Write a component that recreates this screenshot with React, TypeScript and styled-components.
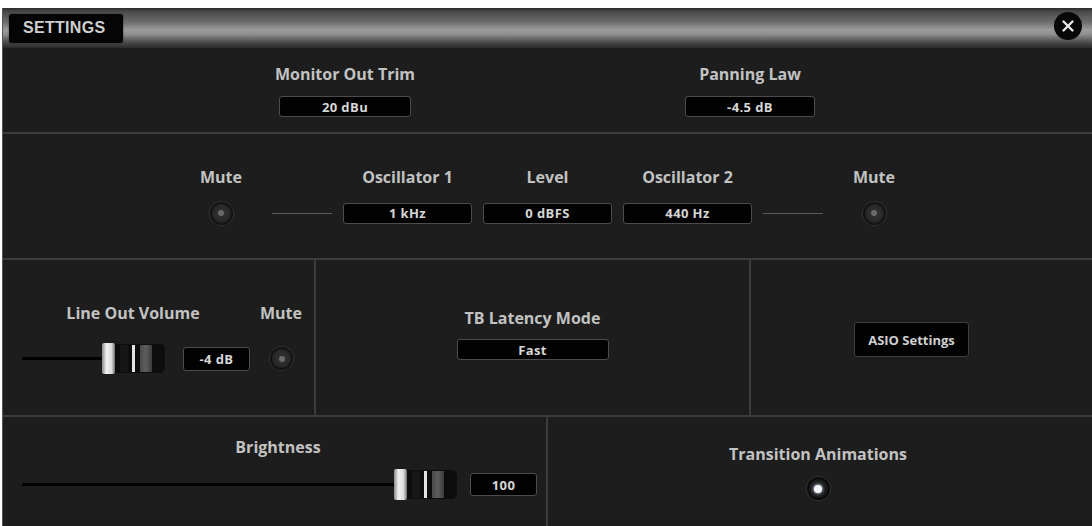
import React from "react";
import styled, { createGlobalStyle } from "styled-components";

const GlobalStyle = createGlobalStyle`
  html, body {
    margin: 0;
    padding: 0;
    background: #ffffff;
  }
  * {
    box-sizing: border-box;
  }
`;

const Page = styled.div`
  width: 1092px;
  height: 526px;
  padding: 8px 0 0 2px;
  background: #ffffff;
  overflow: hidden;
`;

const Panel = styled.div`
  width: 1090px;
  height: 518px;
  display: flex;
  flex-direction: column;
  background: #1d1d1d;
  font-family: "Open Sans", "Liberation Sans", sans-serif;
  color: #c6c6c6;
  border-left: 1px solid #555;
`;

const TitleBar = styled.div`
  height: 40px;
  flex: none;
  display: flex;
  align-items: center;
  justify-content: space-between;
  padding: 0 10px 0 6px;
  background: linear-gradient(
    to bottom,
    #2c2c2c 0%,
    #4c4c4c 10%,
    #6c6c6c 35%,
    #9c9c9c 55%,
    #8e8e8e 66%,
    #4a4a4a 86%,
    #2a2a2a 100%
  );
`;

const TitleTab = styled.div`
  height: 29px;
  width: 114px;
  display: flex;
  align-items: center;
  padding-left: 14px;
  background: #050505;
  border-radius: 3px;
  box-shadow: 0 0 2px rgba(0, 0, 0, 0.6);
  font-family: "Liberation Sans", Arial, sans-serif;
  font-weight: 700;
  font-size: 16px;
  letter-spacing: 0.3px;
  color: #cfcfcf;
`;

const CloseButton = styled.div`
  width: 28px;
  height: 28px;
  border-radius: 50%;
  background: #080808;
  display: flex;
  align-items: center;
  justify-content: center;
  margin-top: -4px;
`;

const Section = styled.div<{ $h: number }>`
  height: ${(p) => p.$h}px;
  flex: none;
  border-bottom: 2px solid #3c3c3c;
`;

const LastSection = styled.div`
  flex: 1;
  display: grid;
  grid-template-columns: 543px 2px 1fr;
`;

const Divider = styled.div`
  background: #3c3c3c;
`;

const Label = styled.div`
  font-size: 16px;
  font-weight: 700;
  line-height: 18px;
  color: #c2c2c2;
  text-align: center;
  white-space: nowrap;
`;

const ValueBox = styled.div<{ $w: number; $h?: number }>`
  width: ${(p) => p.$w}px;
  height: ${(p) => p.$h ?? 21}px;
  flex: none;
  display: flex;
  align-items: center;
  justify-content: center;
  background: #020202;
  border: 1px solid #4c4c4c;
  border-radius: 3px;
  font-size: 13px;
  font-weight: 700;
  letter-spacing: 0.4px;
  color: #d6d6d6;
  white-space: nowrap;
`;

/* top row: two centred fields */
const TopRow = styled.div`
  height: 100%;
  display: flex;
  justify-content: center;
  gap: 165px;
  padding-top: 17px;
`;

const Field = styled.div`
  width: 240px;
  display: flex;
  flex-direction: column;
  align-items: center;
  gap: 13px;
`;

/* oscillator row */
const OscGrid = styled.div`
  height: 100%;
  display: grid;
  justify-content: center;
  grid-template-columns: 80px 60px 129px 129px 129px 60px 80px;
  grid-template-rows: 18px 22px;
  column-gap: 11px;
  row-gap: 16px;
  align-items: center;
  justify-items: center;
  padding-top: 34px;
`;

const Wire = styled.div`
  width: 60px;
  height: 1px;
  background: #5a5a5a;
`;

const KnobRing = styled.div<{ $lit?: boolean }>`
  width: 23px;
  height: 23px;
  flex: none;
  border-radius: 50%;
  display: flex;
  align-items: center;
  justify-content: center;
  background: ${(p) => (p.$lit ? "#1a1a1a" : "radial-gradient(circle, #2e2e2e 40%, #242424 70%)")};
  border: 2px solid ${(p) => (p.$lit ? "#0a0a0a" : "#141414")};
  box-shadow: 0 0 1px 1px rgba(70, 70, 70, 0.5);
`;

const KnobDot = styled.div<{ $lit?: boolean }>`
  width: ${(p) => (p.$lit ? 8 : 6)}px;
  height: ${(p) => (p.$lit ? 8 : 6)}px;
  border-radius: 50%;
  background: ${(p) => (p.$lit ? "#f4f6ff" : "#6a6a6a")};
  box-shadow: ${(p) => (p.$lit ? "0 0 3px 1px rgba(220,230,255,0.7)" : "none")};
`;

const Knob: React.FC<{ lit?: boolean }> = ({ lit }) => (
  <KnobRing $lit={lit}>
    <KnobDot $lit={lit} />
  </KnobRing>
);

/* middle row */
const MidRow = styled(Section)`
  display: grid;
  grid-template-columns: 311px 2px 433px 2px 1fr;
`;

const LineOutCell = styled.div`
  display: flex;
  flex-direction: column;
  gap: 21px;
  padding: 44px 0 0 19px;
`;

const LabelRow = styled.div`
  display: flex;
  align-items: center;
`;

const LineOutLabel = styled(Label)`
  width: 222px;
`;

const MuteLabel = styled(Label)`
  width: 50px;
  margin-left: 12px;
`;

const SliderRow = styled.div`
  display: flex;
  align-items: center;
`;

const CenterCell = styled.div`
  display: flex;
  flex-direction: column;
  align-items: center;
  gap: 12px;
  padding-top: 49px;
`;

const AsioCell = styled.div`
  display: flex;
  justify-content: center;
  padding: 62px 20px 0 0;
`;

const AsioButton = styled.div`
  width: 115px;
  height: 35px;
  display: flex;
  align-items: center;
  justify-content: center;
  background: #030303;
  border: 1px solid #3e3e3e;
  border-radius: 3px;
  font-size: 13px;
  font-weight: 700;
  color: #cfcfcf;
`;

/* bottom row */
const BrightnessCell = styled.div`
  display: flex;
  flex-direction: column;
  align-items: flex-start;
  gap: 13px;
  padding: 21px 0 0 19px;
`;

const BrightnessLabel = styled(Label)`
  width: 512px;
`;

const Track = styled.div<{ $w: number }>`
  width: ${(p) => p.$w}px;
  height: 3px;
  flex: none;
  background: #000;
  border-radius: 2px;
`;

const TransitionCell = styled.div`
  display: flex;
  flex-direction: column;
  align-items: center;
  gap: 14px;
  padding: 28px 4px 0 0;
`;

const Spacer = styled.div<{ $w: number }>`
  width: ${(p) => p.$w}px;
  flex: none;
`;

const FaderCap: React.FC = () => (
  <svg width="64" height="31" viewBox="0 0 64 31" style={{ flex: "none" }}>
    <defs>
      <linearGradient id="capL" x1="0" x2="1">
        <stop offset="0" stopColor="#8a8a8a" />
        <stop offset="0.35" stopColor="#f2f2f2" />
        <stop offset="0.75" stopColor="#d8d8d8" />
        <stop offset="1" stopColor="#6a6a6a" />
      </linearGradient>
      <linearGradient id="capG" x1="0" x2="1">
        <stop offset="0" stopColor="#4a4a4a" />
        <stop offset="0.5" stopColor="#5e5e5e" />
        <stop offset="1" stopColor="#3a3a3a" />
      </linearGradient>
    </defs>
    <path d="M13 1 H58 Q63 1 63 8 V23 Q63 30 58 30 H13 Z" fill="#0d0d0d" />
    <rect x="18" y="2" width="8" height="27" fill="#161616" />
    <rect x="0" y="0" width="13" height="31" rx="2" fill="url(#capL)" />
    <rect x="30" y="2" width="3" height="27" fill="#e4e4e4" />
    <rect x="38" y="2" width="12" height="27" fill="url(#capG)" />
  </svg>
);

export default function App() {
  return (
    <>
      <GlobalStyle />
      <Page>
        <Panel>
          <TitleBar>
            <TitleTab>SETTINGS</TitleTab>
            <CloseButton>
              <svg width="14" height="14" viewBox="0 0 14 14">
                <path d="M2.5 2.5 L11.5 11.5 M11.5 2.5 L2.5 11.5" stroke="#e8e8e8" strokeWidth="2.4" strokeLinecap="round" />
              </svg>
            </CloseButton>
          </TitleBar>

          <Section $h={86}>
            <TopRow>
              <Field>
                <Label>Monitor Out Trim</Label>
                <ValueBox $w={132}>20 dBu</ValueBox>
              </Field>
              <Field>
                <Label>Panning Law</Label>
                <ValueBox $w={130}>-4.5 dB</ValueBox>
              </Field>
            </TopRow>
          </Section>

          <Section $h={126}>
            <OscGrid>
              <Label>Mute</Label>
              <span />
              <Label>Oscillator 1</Label>
              <Label>Level</Label>
              <Label>Oscillator 2</Label>
              <span />
              <Label>Mute</Label>
              <Knob />
              <Wire />
              <ValueBox $w={129}>1 kHz</ValueBox>
              <ValueBox $w={129}>0 dBFS</ValueBox>
              <ValueBox $w={129}>440 Hz</ValueBox>
              <Wire />
              <Knob />
            </OscGrid>
          </Section>

          <MidRow $h={157}>
            <LineOutCell>
              <LabelRow>
                <LineOutLabel>Line Out Volume</LineOutLabel>
                <MuteLabel>Mute</MuteLabel>
              </LabelRow>
              <SliderRow>
                <Track $w={80} />
                <FaderCap />
                <Spacer $w={17} />
                <ValueBox $w={67} $h={24}>-4 dB</ValueBox>
                <Spacer $w={20} />
                <Knob />
              </SliderRow>
            </LineOutCell>
            <Divider />
            <CenterCell>
              <Label>TB Latency Mode</Label>
              <ValueBox $w={152}>Fast</ValueBox>
            </CenterCell>
            <Divider />
            <AsioCell>
              <AsioButton>ASIO Settings</AsioButton>
            </AsioCell>
          </MidRow>

          <LastSection>
            <BrightnessCell>
              <BrightnessLabel>Brightness</BrightnessLabel>
              <SliderRow>
                <Track $w={372} />
                <FaderCap />
                <Spacer $w={12} />
                <ValueBox $w={67} $h={23}>100</ValueBox>
              </SliderRow>
            </BrightnessCell>
            <Divider />
            <TransitionCell>
              <Label>Transition Animations</Label>
              <Knob lit />
            </TransitionCell>
          </LastSection>
        </Panel>
      </Page>
    </>
  );
}
